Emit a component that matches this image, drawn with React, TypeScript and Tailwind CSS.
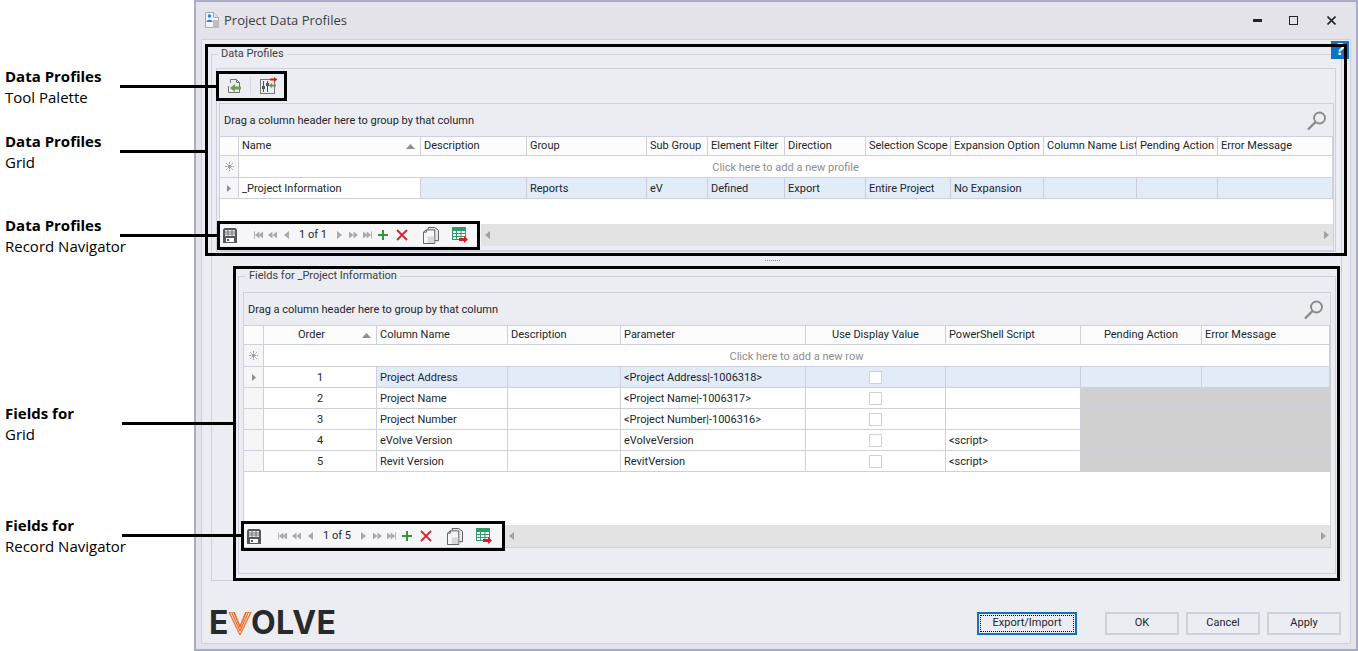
import type { ReactNode } from 'react'

const line = 'border-[#cfd0de]'

function TitleIcon() {
  return (
    <svg width="17" height="18" viewBox="0 0 17 18">
      <path d="M1.5 1.5h8l5 5v10h-13z" fill="#f4f5f8" stroke="#a4a8b2" />
      <path d="M9.5 1.5v5h5" fill="#dfe2e8" stroke="#a4a8b2" />
      <rect x="9" y="9" width="6" height="8" fill="#b9bcc4" />
      <circle cx="5.5" cy="5" r="1.8" fill="#2a82dc" />
      <path d="M2.5 11c0-3 6-3 6 0z" fill="#2a82dc" />
    </svg>
  )
}

function ImportIcon() {
  return (
    <svg width="16" height="16" viewBox="0 0 16 16">
      <path d="M4.500 5V1.500h6l3 3v10H2.500V8" fill="none" stroke="#6f7276" />
      <path d="M10.500 1.500v3h3" fill="none" stroke="#6f7276" />
      <path d="M15 8.500v3H9V14L4 10l5-4v2.500z" fill="#6e9f50" />
    </svg>
  )
}

function MappingIcon() {
  return (
    <svg width="18" height="18" viewBox="0 0 18 18">
      <rect x="0.500" y="2.500" width="14" height="14" fill="none" stroke="#77797d" />
      <path d="M3.500 4v11M7.500 4v11" stroke="#55575b" />
      <rect x="2" y="9" width="3" height="3" fill="#55575b" />
      <rect x="6" y="6" width="3" height="3" fill="#55575b" />
      <path d="M10 1.500h4V0l3.500 2.500L14 5V3.500h-4z" fill="#d01f1f" />
      <path d="M16 7.500h-4V6L8.500 8.500 12 11V9.500h4z" fill="#6e9f50" />
    </svg>
  )
}

function SaveIcon() {
  return (
    <svg width="14" height="15" viewBox="0 0 14 15">
      <path d="M0 1.500 1.500 0h11L14 1.500V15H0z" fill="#55585c" />
      <rect x="2" y="2" width="10" height="6" fill="#e6e6e6" />
      <path d="M2 4h10M2 6h10M5 2v6M9 2v6" stroke="#55585c" strokeWidth="0.700" />
      <rect x="3" y="10" width="8" height="4" fill="#fff" />
      <rect x="4" y="11" width="2" height="2" fill="#55585c" />
    </svg>
  )
}

// one little gray triangle, left or right
function Tri({ dir, x = 0 }: { dir: 'l' | 'r'; x?: number }) {
  const d = dir === 'l' ? `M${x + 5} 0v8l-5-4z` : `M${x} 0v8l5-4z`
  return <path d={d} fill="#a9a9a9" />
}

function NavFirst() {
  return <svg width="9" height="8" viewBox="0 0 10 8"><rect width="1" height="8" fill="#a9a9a9" /><Tri dir="l" x={1} /><Tri dir="l" x={5} /></svg>
}
function NavPage({ dir }: { dir: 'l' | 'r' }) {
  return <svg width="9" height="8" viewBox="0 0 10 8"><Tri dir={dir} /><Tri dir={dir} x={5} /></svg>
}
function NavOne({ dir }: { dir: 'l' | 'r' }) {
  return <svg width="5" height="8" viewBox="0 0 5 8"><Tri dir={dir} /></svg>
}
function NavLast() {
  return <svg width="9" height="8" viewBox="0 0 10 8"><Tri dir="r" /><Tri dir="r" x={4} /><rect x="9" width="1" height="8" fill="#a9a9a9" /></svg>
}

function CopyIcon() {
  return (
    <svg width="16" height="17" viewBox="0 0 17 18">
      <path d="M5.500 3.500V.5h7l4 3v11h-4" fill="#e8e8e8" stroke="#55585c" />
      <path d="M.5 5.500l3-2.500h9v14.500H.5z" fill="#f6f6f6" stroke="#55585c" />
      <path d="M.5 5.500h3V3" fill="none" stroke="#55585c" />
      <rect x="5" y="10" width="7" height="7" fill="#d8d8d8" />
    </svg>
  )
}

function GridExportIcon() {
  return (
    <svg width="16" height="16" viewBox="0 0 16 16">
      <rect x="0.500" y="0.500" width="13" height="12" fill="#fff" stroke="#2f9b68" />
      <rect x="1" y="1" width="12" height="3" fill="#2f9b68" />
      <path d="M1 6.500h12M1 9.500h12M4.500 4v8M9 4v8" stroke="#2f9b68" />
      <path d="M7 11h5V9l4 3.500-4 3.500v-2H7z" fill="#d51f26" />
    </svg>
  )
}

function NavBar({ record }: { record: string }) {
  return (
    <div className="flex h-[22px] shrink-0 items-center bg-[#e3e3e3]">
      <div className="flex h-full w-[261px] shrink-0 items-center bg-[#f6f6f8] pl-[3px]">
        <SaveIcon />
        <div className="ml-[17px] flex items-center"><NavFirst /></div>
        <div className="ml-[5px] flex items-center"><NavPage dir="l" /></div>
        <div className="ml-[7px] flex items-center"><NavOne dir="l" /></div>
        <span className="w-[48px] text-center text-[#1d2733]">{record}</span>
        <NavOne dir="r" />
        <div className="ml-[7px] flex items-center"><NavPage dir="r" /></div>
        <div className="ml-[5px] flex items-center"><NavLast /></div>
        <svg className="ml-[6px]" width="10" height="10" viewBox="0 0 10 10"><path d="M4 0h2v4h4v2H6v4H4V6H0V4h4z" fill="#2f9a35" /></svg>
        <svg className="ml-[8px]" width="12" height="12" viewBox="0 0 12 12"><path d="M1 1l10 10M11 1 1 11" stroke="#d8232a" strokeWidth="1.800" /></svg>
        <div className="ml-[15px] flex items-center"><CopyIcon /></div>
        <div className="ml-[13px] flex items-center"><GridExportIcon /></div>
      </div>
      <div className="flex h-full flex-1 items-center justify-between pl-[4px] pr-[4px]">
        <svg width="5" height="8" viewBox="0 0 5 8"><path d="M5 0v8L0 4z" fill="#a0a0a0" /></svg>
        <svg width="5" height="8" viewBox="0 0 5 8"><path d="M0 0v8l5-4z" fill="#a0a0a0" /></svg>
      </div>
    </div>
  )
}

function Magnifier() {
  return (
    <svg width="20" height="20" viewBox="0 0 20 20">
      <circle cx="12.500" cy="7" r="5.500" fill="none" stroke="#8a8a8a" strokeWidth="1.800" />
      <path d="M8.500 11 1 18.500" stroke="#8a8a8a" strokeWidth="2.400" />
    </svg>
  )
}

function Cell({ children, className = '' }: { children?: ReactNode; className?: string }) {
  return <div className={`flex items-center overflow-hidden whitespace-nowrap border-r border-b px-[3px] pt-[1px] ${line} ${className}`}>{children}</div>
}

function HeadCell({ children, className = '' }: { children?: ReactNode; className?: string }) {
  return <Cell className={`border-t pb-[2px] ${className}`}>{children}</Cell>
}

function SortArrow() {
  return <svg className="absolute right-[5px] top-[7px]" width="9" height="5" viewBox="0 0 9 5"><path d="M0 5 4.500 0 9 5z" fill="#8f8f8f" /></svg>
}

function Indicator({ type }: { type: 'new' | 'row' | 'blank' }) {
  return (
    <div className={`flex items-center justify-center border-r border-b bg-[#f6f6f8] ${line}`}>
      {type === 'new' && (
        <svg width="9" height="9" viewBox="0 0 9 9">
          <path d="M4.500 0v9M0 4.500h9M1.200 1.200l6.600 6.600M7.800 1.200 1.200 7.800" stroke="#9a9a9a" strokeWidth="1" strokeDasharray="2 0.600" />
        </svg>
      )}
      {type === 'row' && <svg width="4" height="7" viewBox="0 0 4 7"><path d="M0 0v7l4-3.500z" fill="#8f8f8f" /></svg>}
    </div>
  )
}

function Check({ white = false }: { white?: boolean }) {
  return <div className={`mx-auto h-[13px] w-[13px] border ${line} ${white ? 'bg-white' : ''}`} />
}

function DropBar() {
  return (
    <div className="flex h-[32px] shrink-0 items-center justify-between pl-[4px] pr-[6px] pt-[2px]">
      <span>Drag a column header here to group by that column</span>
      <Magnifier />
    </div>
  )
}

function ProfilesGrid() {
  const cols = 'grid grid-cols-[19px_182px_106px_120px_61px_77px_81px_85px_93px_93px_81px_1fr]'
  const heads = ['Description', 'Group', 'Sub Group', 'Element Filter', 'Direction', 'Selection Scope', 'Expansion Option', 'Column Name List', 'Pending Action', 'Error Message']
  const vals = ['', 'Reports', 'eV', 'Defined', 'Export', 'Entire Project', 'No Expansion', '', '', '']
  return (
    <div className={`flex h-[148px] flex-col border bg-[#ecedf2] ${line}`}>
      <DropBar />
      <div className={`${cols} h-[20px] bg-[#fcfcfd]`}>
        <div className={`border-r border-b border-t ${line}`} />
        <HeadCell className="relative">Name<SortArrow /></HeadCell>
        {heads.map(h => <HeadCell key={h}>{h}</HeadCell>)}
      </div>
      <div className="grid h-[22px] grid-cols-[19px_1fr] bg-white">
        <Indicator type="new" />
        <Cell className="justify-center text-[#8d8d8d]"><span className="mt-[2px]">Click here to add a new profile</span></Cell>
      </div>
      <div className={`${cols} h-[21px] bg-[#e2ecf8]`}>
        <Indicator type="row" />
        <Cell className="bg-white">_Project Information</Cell>
        {vals.map((v, i) => <Cell key={i}>{v}</Cell>)}
      </div>
      <div className="flex-1 bg-white" />
      <NavBar record="1 of 1" />
      <div className="h-[4px] shrink-0" />
    </div>
  )
}

const fieldRows = [
  { order: 1, name: 'Project Address', param: '<Project Address|-1006318>', script: '' },
  { order: 2, name: 'Project Name', param: '<Project Name|-1006317>', script: '' },
  { order: 3, name: 'Project Number', param: '<Project Number|-1006316>', script: '' },
  { order: 4, name: 'eVolve Version', param: 'eVolveVersion', script: '<script>' },
  { order: 5, name: 'Revit Version', param: 'RevitVersion', script: '<script>' },
]

function FieldsGrid() {
  const cols = 'grid grid-cols-[20px_113px_131px_113px_185px_140px_135px_121px_1fr]'
  return (
    <div className={`flex h-[256px] flex-col border bg-[#ecedf2] ${line}`}>
      <DropBar />
      <div className={`${cols} h-[20px] bg-[#fcfcfd]`}>
        <div className={`border-r border-b border-t ${line}`} />
        <HeadCell className="relative justify-center pr-[20px]">Order<SortArrow /></HeadCell>
        <HeadCell>Column Name</HeadCell>
        <HeadCell>Description</HeadCell>
        <HeadCell>Parameter</HeadCell>
        <HeadCell className="justify-center">Use Display Value</HeadCell>
        <HeadCell>PowerShell Script</HeadCell>
        <HeadCell className="justify-center">Pending Action</HeadCell>
        <HeadCell>Error Message</HeadCell>
      </div>
      <div className="grid h-[22px] grid-cols-[20px_1fr] bg-white">
        <Indicator type="new" />
        <Cell className="justify-center text-[#8d8d8d]"><span className="mt-[2px]">Click here to add a new row</span></Cell>
      </div>
      {fieldRows.map((r, i) => {
        const current = i === 0
        return (
          <div key={r.order} className={`${cols} h-[21px] ${current ? 'bg-[#e2ecf8]' : 'bg-white'}`}>
            <Indicator type={current ? 'row' : 'blank'} />
            <Cell className="justify-center bg-white">{r.order}</Cell>
            <Cell>{r.name}</Cell>
            <Cell />
            <Cell>{r.param}</Cell>
            <Cell><Check white={current} /></Cell>
            <Cell>{r.script}</Cell>
            <Cell className={current ? '' : 'bg-[#d0d0d0]'} />
            <Cell className={current ? '' : 'bg-[#d0d0d0]'} />
          </div>
        )
      })}
      <div className="flex-1 bg-white" />
      <NavBar record="1 of 5" />
    </div>
  )
}

function DialogButton({ children, focused = false }: { children: ReactNode; focused?: boolean }) {
  if (focused) {
    return (
      <button className="h-[23px] w-[100px] border-2 border-[#1172bd] p-[1px]">
        <span className="flex h-full w-full items-center justify-center border border-dotted border-black">{children}</span>
      </button>
    )
  }
  return <button className={`h-[23px] w-[74px] border-2 ${line}`}>{children}</button>
}

function Logo() {
  return (
    <div className="-ml-[2px] flex h-[24px] items-center font-['Inter'] text-[32px] font-bold leading-none tracking-[0.5px] text-[#27292b]">
      <span>E</span>
      <svg width="24" height="23" viewBox="0 0 24 23" className="-mx-[1px]">
        <path d="M1 0h5l6 15L18 0h5L12 23z" fill="none" stroke="#f26a21" strokeWidth="1.200" />
        <path d="M6 0l6 15M18 0l-6 15M3.500 0 12 19M20.500 0 12 19" stroke="#f26a21" strokeWidth="1.200" />
      </svg>
      <span>OLVE</span>
    </div>
  )
}

function Window() {
  return (
    <div className="ml-[194px] flex h-[651px] w-[1164px] flex-col border-2 border-[#a9abc8] bg-[#e3e3e9] font-['Roboto',sans-serif] text-[11px] leading-[14px] text-[#20262e]">
      <div className="flex h-[36px] shrink-0 items-center pl-[8px]">
        <TitleIcon />
        <span className="ml-[3px] font-['Open_Sans',sans-serif] text-[13px] text-[#3a3f48]">Project Data Profiles</span>
        <div className="ml-auto flex items-center">
          <div className="h-[3px] w-[9px] bg-[#20262e]" />
          <div className="ml-[27px] h-[9px] w-[9px] border-[1.500px] border-[#20262e]" />
          <svg className="ml-[29px] mr-[20px]" width="9" height="9" viewBox="0 0 9 9"><path d="M.5.5l8 8M8.500.5l-8 8" stroke="#20262e" strokeWidth="1.600" /></svg>
        </div>
      </div>
      <div className={`ml-[5px] mt-[1px] flex h-[605px] w-[1150px] flex-col border ${line} bg-[#ecedf2] pl-[9px] pr-[8px] pt-[7px]`}>
        <fieldset className={`h-[534px] w-[1131px] shrink-0 border ${line} pl-[4px] pr-[5px]`}>
          <legend className="ml-[2px] px-[3px] text-[#3a3f48]">Data Profiles</legend>
          <div className={`mt-[7px] h-[184px] border ${line} pl-[2px] pr-[1px]`}>
            <div className="flex h-[34px] items-center pl-[7px]">
              <ImportIcon />
              <div className="ml-[8px] mr-[9px] h-[18px] w-px bg-[#d6d7e0]" />
              <MappingIcon />
            </div>
            <ProfilesGrid />
          </div>
          <div className="flex h-[17px] items-center justify-center pr-[8px]">
            <div className="h-px w-[15px] border-t border-dotted border-[#8a8a8a]" />
          </div>
          <fieldset className={`ml-[22px] h-[305px] w-[1098px] border ${line} pl-[4px] pr-[4px]`}>
            <legend className="ml-[3px] px-[3px] text-[#3a3f48]">Fields for _Project Information</legend>
            <div className="mt-[9px]"><FieldsGrid /></div>
          </fieldset>
        </fieldset>
        <div className="flex flex-1 items-center pb-[2px] pr-[1px] pt-[24px]">
          <Logo />
          <div className="ml-auto flex items-center gap-[7px]">
            <div className="mr-[21px]"><DialogButton focused>Export/Import</DialogButton></div>
            <DialogButton>OK</DialogButton>
            <DialogButton>Cancel</DialogButton>
            <DialogButton>Apply</DialogButton>
          </div>
        </div>
      </div>
    </div>
  )
}

function Callout({ title, sub, className }: { title: string; sub: string; className: string }) {
  return (
    <div className={`absolute left-[5px] font-['Open_Sans',sans-serif] text-[15px] leading-[21px] text-black ${className}`}>
      <div className="font-bold">{title}</div>
      <div>{sub}</div>
    </div>
  )
}

export default function App() {
  return (
    <div className="relative h-[651px] w-[1358px] overflow-hidden bg-white">
      <Window />

      <div className="absolute left-[1331px] top-[41px] flex h-[18px] w-[18px] items-center justify-center bg-[#0a74c8] font-['Liberation_Sans',sans-serif] text-[17px] font-bold text-white">?</div>

      <Callout title="Data Profiles" sub="Tool Palette" className="top-[66px]" />
      <Callout title="Data Profiles" sub="Grid" className="top-[131px]" />
      <Callout title="Data Profiles" sub="Record Navigator" className="top-[215px]" />
      <Callout title="Fields for" sub="Grid" className="top-[403px]" />
      <Callout title="Fields for" sub="Record Navigator" className="top-[515px]" />

      <div className="absolute left-[120px] top-[85px] h-[3px] w-[96px] bg-black" />
      <div className="absolute left-[120px] top-[150px] h-[3px] w-[85px] bg-black" />
      <div className="absolute left-[120px] top-[234px] h-[3px] w-[97px] bg-black" />
      <div className="absolute left-[122px] top-[422px] h-[3px] w-[111px] bg-black" />
      <div className="absolute left-[122px] top-[534px] h-[3px] w-[119px] bg-black" />

      <div className="absolute left-[205px] top-[44px] h-[212px] w-[1142px] border-[3px] border-black" />
      <div className="absolute left-[216px] top-[71px] h-[30px] w-[71px] border-[3px] border-black" />
      <div className="absolute left-[217px] top-[221px] h-[29px] w-[263px] border-[3px] border-black" />
      <div className="absolute left-[233px] top-[266px] h-[315px] w-[1107px] border-[3px] border-black" />
      <div className="absolute left-[241px] top-[521px] h-[30px] w-[264px] border-[3px] border-black" />
    </div>
  )
}
